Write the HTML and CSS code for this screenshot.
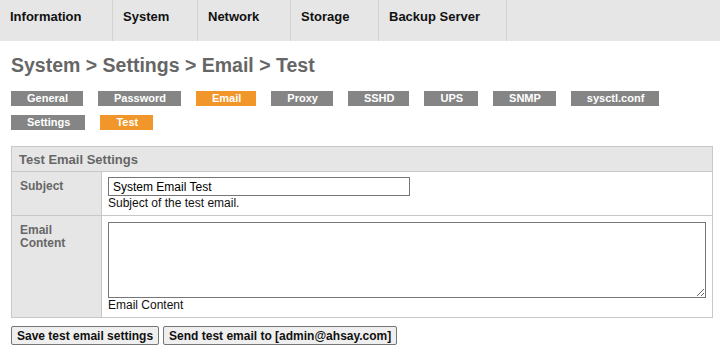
FILE: index.html
```html
<!DOCTYPE html>
<html lang="en">
<head>
    <meta charset="UTF-8">
    <title>System Settings - Email Test</title>
    <link rel="stylesheet" href="styles.css">
</head>
<body>
    <div class="top-nav">
        <a class="nav-item nav-info" href="#">Information</a>
        <a class="nav-item nav-system" href="#">System</a>
        <a class="nav-item nav-network" href="#">Network</a>
        <a class="nav-item nav-storage" href="#">Storage</a>
        <a class="nav-item nav-backup" href="#">Backup Server</a>
    </div>

    <div class="content">
        <h1>System &gt; Settings &gt; Email &gt; Test</h1>

        <div class="tabs">
            <a class="tab" href="#">General</a>
            <a class="tab" href="#">Password</a>
            <a class="tab active" href="#">Email</a>
            <a class="tab" href="#">Proxy</a>
            <a class="tab" href="#">SSHD</a>
            <a class="tab" href="#">UPS</a>
            <a class="tab" href="#">SNMP</a>
            <a class="tab" href="#">sysctl.conf</a>
            <a class="tab" href="#">Settings</a>
            <a class="tab active" href="#">Test</a>
        </div>

        <form action="#" method="post">
            <table class="settings-table">
                <tr>
                    <th colspan="2">Test Email Settings</th>
                </tr>
                <tr class="row-subject">
                    <td class="label">Subject</td>
                    <td class="value">
                        <input type="text" name="subject" value="System Email Test" class="text-input">
                        <div class="hint">Subject of the test email.</div>
                    </td>
                </tr>
                <tr class="row-content">
                    <td class="label">Email<br>Content</td>
                    <td class="value">
                        <textarea name="content" class="text-area"></textarea>
                        <div class="hint">Email Content</div>
                    </td>
                </tr>
            </table>

            <div class="actions">
                <button type="submit" class="btn">Save test email settings</button>
                <button type="button" class="btn">Send test email to [admin@ahsay.com]</button>
            </div>
        </form>
    </div>
</body>
</html>
```

FILE: styles.css
```css
:root {
    --nav-bg: #e6e6e6;
    --border-color: #c8c8c8;
    --tab-gray: #858585;
    --tab-orange: #f0962a;
    --label-color: #666666;
}

body {
    margin: 0;
    font-family: "Liberation Sans", Arial, sans-serif;
    font-size: 12px;
    color: #111;
    background-color: white;
}

.top-nav {
    display: flex;
    height: 41px;
    background-color: var(--nav-bg);
}

.nav-item {
    box-sizing: border-box;
    height: 41px;
    padding: 9px 0 0 10px;
    border-right: 1px solid #d2d2d2;
    color: #111;
    font-weight: bold;
    font-size: 13px;
    line-height: 16px;
    text-decoration: none;
}

.nav-info { width: 113px; }
.nav-system { width: 85px; }
.nav-network { width: 93px; }
.nav-storage { width: 88px; }
.nav-backup { width: 128px; }

.content {
    padding: 0 7px 0 11px;
}

h1 {
    margin: 12px 0 14px;
    font-size: 19.5px;
    line-height: 24px;
    color: var(--label-color);
}

.tabs {
    display: flex;
    flex-wrap: wrap;
    gap: 9px 15px;
}

.tab {
    height: 15px;
    padding: 0 15px 0 16px;
    background-color: var(--tab-gray);
    color: white;
    font-weight: bold;
    font-size: 11px;
    line-height: 15px;
    text-decoration: none;
}

.tab.active {
    background-color: var(--tab-orange);
}

.settings-table {
    width: 702px;
    margin-top: 16px;
    border-collapse: collapse;
}

.settings-table th {
    height: 24px;
    padding: 0 7px;
    background-color: var(--nav-bg);
    border: 1px solid var(--border-color);
    color: var(--label-color);
    font-size: 13px;
    text-align: left;
}

.settings-table td {
    border: 1px solid var(--border-color);
    vertical-align: top;
}

.label {
    width: 76px;
    padding: 8px 7px 0 8px;
    background-color: var(--nav-bg);
    color: var(--label-color);
    font-weight: bold;
    line-height: 13px;
}

.value {
    padding: 5px 6px;
}

.row-subject td { height: 33px; }

.row-content .value { padding-top: 6px; }

.text-input {
    display: block;
    box-sizing: border-box;
    width: 302px;
    height: 19px;
    margin: 0;
    padding: 0 4px;
    border: 1px solid #767676;
    font-family: inherit;
    font-size: 12px;
}

.text-area {
    display: block;
    box-sizing: border-box;
    width: 598px;
    height: 76px;
    margin: 0;
    border: 1px solid #767676;
    font-family: inherit;
    font-size: 12px;
}

.hint {
    font-size: 12px;
    line-height: 14px;
}

.actions {
    display: flex;
    gap: 4px;
    margin-top: 8px;
}

.btn {
    height: 19px;
    padding: 0 5px;
    border: 1px solid #767676;
    border-radius: 2px;
    background-color: #efefef;
    color: #111;
    font-family: inherit;
    font-weight: bold;
    font-size: 12px;
    cursor: pointer;
}
```
